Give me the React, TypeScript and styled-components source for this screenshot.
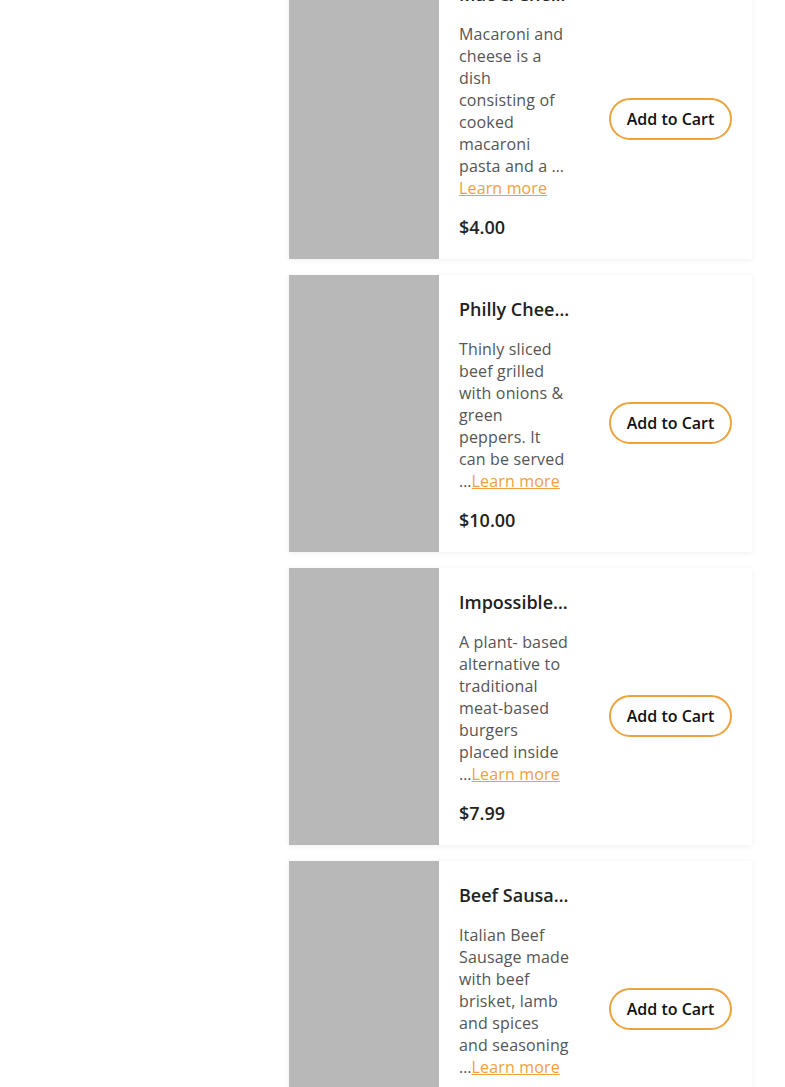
import styled, { createGlobalStyle } from "styled-components";

interface MenuItem {
    id: number,
    title: string,
    description: string,
    price: string,
}

const items: MenuItem[] = [
    {
        id: 1,
        title: "Mac & Cheese",
        description: "Macaroni and cheese is a dish consisting of cooked macaroni pasta and a \u2026",
        price: "$4.00",
    },
    {
        id: 2,
        title: "Philly Cheesesteak",
        description: "Thinly sliced beef grilled with onions & green peppers. It can be served \u2026",
        price: "$10.00",
    },
    {
        id: 3,
        title: "Impossible Burger",
        description: "A plant- based alternative to traditional meat-based burgers placed inside \u2026",
        price: "$7.99",
    },
    {
        id: 4,
        title: "Beef Sausage",
        description: "Italian Beef Sausage made with beef brisket, lamb and spices and seasoning \u2026",
        price: "$8.50",
    },
];

function MenuCard(props: { item: MenuItem }) {
    const { title, description, price } = props.item;
    return (
        <Card>
            <Picture />
            <Body>
                <Info>
                    <Title>{title}</Title>
                    <Description>
                        {description}<LearnMore href="#">Learn more</LearnMore>
                    </Description>
                    <Price>{price}</Price>
                </Info>
                <CartButton>Add to Cart</CartButton>
            </Body>
        </Card>
    );
}

export default function App() {
    return (
        <>
            <GlobalStyle />
            <Page>
                <Sidebar />
                <List>
                    {items.map(item => <MenuCard key={item.id} item={item} />)}
                </List>
            </Page>
        </>
    );
}

const GlobalStyle = createGlobalStyle`
    html, body {
        margin: 0;
        padding: 0;
        overflow: hidden;
        background: #fff;
        font-family: "Open Sans", "Liberation Sans", sans-serif;
    }
`;
const Page = styled.div`
    display: flex;
    height: 1087px;
    overflow: hidden;
`;
const Sidebar = styled.div`
    width: 289px;
    flex-shrink: 0;
`;
const List = styled.div`
    display: flex;
    flex-direction: column;
    gap: 16px;
    width: 463px;
    margin-top: -40px;
`;
const Card = styled.div`
    display: flex;
    background: #fff;
    box-shadow: 0 1px 6px rgba(0, 0, 0, 0.07);
`;
const Picture = styled.div`
    width: 150px;
    flex-shrink: 0;
    background: #b8b8b8;
`;
const Body = styled.div`
    flex: 1;
    display: flex;
    align-items: center;
    justify-content: space-between;
    padding: 21px 20px 19px;
`;
const Info = styled.div`
    width: 111px;
    display: flex;
    flex-direction: column;
`;
const Title = styled.h3`
    margin: 0 0 16px;
    font-size: 18px;
    line-height: 26px;
    font-weight: 600;
    color: #222;
    white-space: nowrap;
    overflow: hidden;
    text-overflow: ellipsis;
`;
const Description = styled.p`
    margin: 0 0 16px;
    font-size: 16px;
    line-height: 22px;
    letter-spacing: 0.15px;
    color: #555;
`;
const LearnMore = styled.a`
    color: #f0a040;
    text-decoration: underline;
`;
const Price = styled.div`
    font-size: 18px;
    line-height: 25px;
    font-weight: 600;
    color: #222;
`;
const CartButton = styled.button`
    margin-top: 17px;
    width: 123px;
    height: 42px;
    border: 2px solid #eea23c;
    border-radius: 21px;
    background: #fff;
    font-family: "Open Sans", "Liberation Sans", sans-serif;
    font-size: 16px;
    font-weight: 600;
    color: #111;
    cursor: pointer;
`;
